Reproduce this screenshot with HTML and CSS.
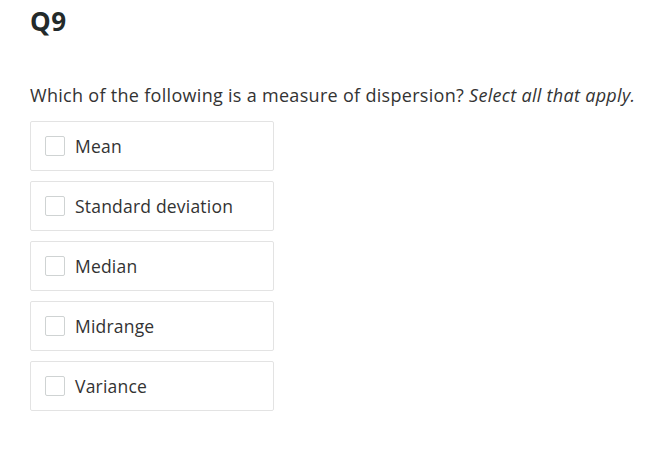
FILE: index.html
```html
<!DOCTYPE html>
<html>
<head>
<meta charset="utf-8">
<link rel="stylesheet" href="styles.css">
</head>
<body>
<div class="page">
  <h1 class="qnum">Q9</h1>
  <p class="prompt">Which of the following is a measure of dispersion? <em>Select all that apply.</em></p>
  <ul class="options">
    <li class="option"><span class="box"></span><span class="label">Mean</span></li>
    <li class="option"><span class="box"></span><span class="label">Standard deviation</span></li>
    <li class="option"><span class="box"></span><span class="label">Median</span></li>
    <li class="option"><span class="box"></span><span class="label">Midrange</span></li>
    <li class="option"><span class="box"></span><span class="label">Variance</span></li>
  </ul>
</div>
</body>
</html>
```
FILE: styles.css
```css
html, body {
  margin: 0;
  padding: 0;
  background: #ffffff;
}
.page {
  padding: 6px 0 0 30px;
  font-family: "Open Sans", "Liberation Sans", sans-serif;
  color: #333333;
}
.qnum {
  margin: 0;
  font-size: 26px;
  line-height: 30px;
  font-weight: 700;
  color: #232a2a;
  letter-spacing: 0.5px;
}
.prompt {
  margin: 47px 0 0 0;
  font-size: 18px;
  line-height: 24px;
  letter-spacing: 0.3px;
  color: #333333;
}
.prompt em {
  font-style: italic;
}
.options {
  list-style: none;
  margin: 14px 0 0 0;
  padding: 0;
  display: flex;
  flex-direction: column;
  gap: 10px;
}
.option {
  width: 242px;
  height: 48px;
  border: 1px solid #e3e3e3;
  border-radius: 2px;
  display: flex;
  align-items: center;
  box-sizing: content-box;
}
.box {
  width: 18px;
  height: 18px;
  border: 1px solid #cfd3d3;
  border-radius: 2px;
  margin-left: 14px;
  margin-right: 10px;
  flex: none;
}
.label {
  font-size: 17.5px;
  letter-spacing: 0.2px;
  color: #333333;
}
```
